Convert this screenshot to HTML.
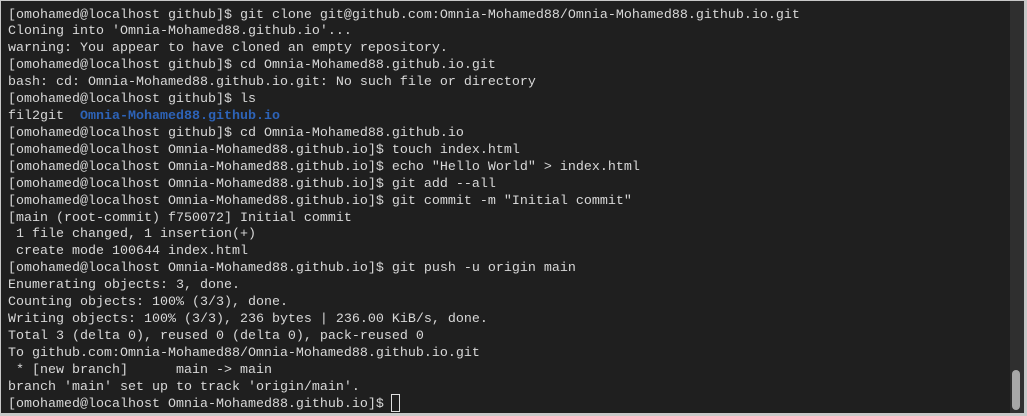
<!DOCTYPE html><html><head><style>
html,body{margin:0;padding:0;width:1027px;height:416px;overflow:hidden;background:#c8c8c8}
.t{position:absolute;left:1px;top:1px;width:1023px;height:412px;background:#1f1f1f}
.sb{position:absolute;left:1010px;top:1px;width:14px;height:412px;background:#2f2f2f}
.th{position:absolute;left:1012px;top:370px;width:8px;height:40px;border-radius:4px;background:#a8a8a8}
pre{position:absolute;left:8px;top:7.5px;margin:0;font-family:"Liberation Mono",monospace;font-size:13.33px;line-height:16.92px;color:#d8d8d8}
.b{color:#2d63b8;font-weight:bold}
.c{position:absolute;left:383px;top:386px;width:9px;height:18px;border:1px solid #e0e0e0;box-sizing:border-box}
</style></head><body><div class="t"></div><div class="sb"></div><div class="th"></div>
<pre>[omohamed@localhost github]$ git clone git@github.com:Omnia-Mohamed88/Omnia-Mohamed88.github.io.git
Cloning into 'Omnia-Mohamed88.github.io'...
warning: You appear to have cloned an empty repository.
[omohamed@localhost github]$ cd Omnia-Mohamed88.github.io.git
bash: cd: Omnia-Mohamed88.github.io.git: No such file or directory
[omohamed@localhost github]$ ls
fil2git  <span class="b">Omnia-Mohamed88.github.io</span>
[omohamed@localhost github]$ cd Omnia-Mohamed88.github.io
[omohamed@localhost Omnia-Mohamed88.github.io]$ touch index.html
[omohamed@localhost Omnia-Mohamed88.github.io]$ echo "Hello World" &gt; index.html
[omohamed@localhost Omnia-Mohamed88.github.io]$ git add --all
[omohamed@localhost Omnia-Mohamed88.github.io]$ git commit -m "Initial commit"
[main (root-commit) f750072] Initial commit
 1 file changed, 1 insertion(+)
 create mode 100644 index.html
[omohamed@localhost Omnia-Mohamed88.github.io]$ git push -u origin main
Enumerating objects: 3, done.
Counting objects: 100% (3/3), done.
Writing objects: 100% (3/3), 236 bytes | 236.00 KiB/s, done.
Total 3 (delta 0), reused 0 (delta 0), pack-reused 0
To github.com:Omnia-Mohamed88/Omnia-Mohamed88.github.io.git
 * [new branch]      main -&gt; main
branch 'main' set up to track 'origin/main'.
[omohamed@localhost Omnia-Mohamed88.github.io]$ <span class="c"></span></pre>
</body></html>
